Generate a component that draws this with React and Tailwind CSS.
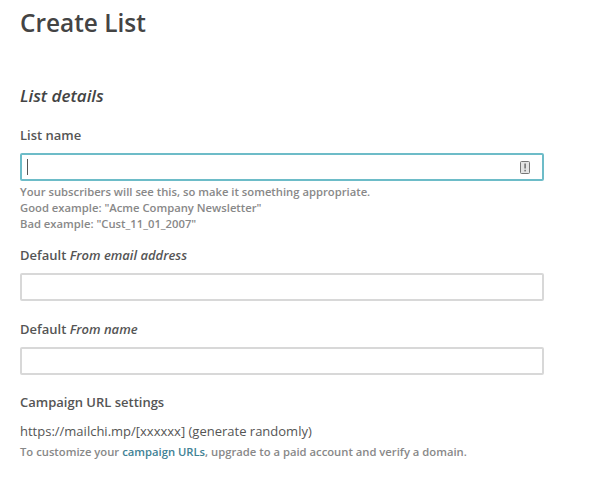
import React from "react";

function Field({ focused, children }) {
  return (
    <div
      className={
        focused
          ? "flex items-center justify-between w-[524px] h-[28px] border-2 border-[#6dbcc8] rounded-[2px] pl-[5px] pr-[12px]"
          : "w-[524px] h-[28px] border-2 border-[#d8d8d8] rounded-[2px]"
      }
    >
      {children}
    </div>
  );
}

export default function App() {
  return (
    <div className="w-[609px] h-[484px] overflow-hidden bg-white pl-[20px] text-[#555555] font-['Open_Sans',sans-serif]">
      <h1 className="pt-[6px] text-[24.4px] leading-[34px] font-semibold text-[#444444]">Create List</h1>

      <h2 className="mt-[44px] text-[17px] leading-[24px] font-semibold italic text-[#444444]">List details</h2>

      <label className="block mt-[18px] text-[13px] leading-[18px] font-semibold">List name</label>
      <div className="mt-[9px]">
        <Field focused>
          <span className="w-px h-[16px] bg-[#555555]"></span>
          <svg width="10" height="13" viewBox="0 0 10 13" fill="none">
            <rect x="0.5" y="0.5" width="9" height="12" rx="1" fill="#e4e4e4" stroke="#777777" />
            <rect x="4.4" y="2.5" width="1.4" height="5" fill="#666666" />
            <rect x="4.4" y="8.8" width="1.4" height="1.6" fill="#666666" />
          </svg>
        </Field>
      </div>
      <div className="mt-[3px] text-[11.25px] leading-[16px] font-semibold text-[#888888]">
        <p>Your subscribers will see this, so make it something appropriate.</p>
        <p>Good example: "Acme Company Newsletter"</p>
        <p>Bad example: "Cust_11_01_2007"</p>
      </div>

      <label className="block mt-[14px] text-[13px] leading-[18px] font-semibold">
        Default <em>From email address</em>
      </label>
      <div className="mt-[9px]">
        <Field />
      </div>

      <label className="block mt-[19px] text-[13px] leading-[18px] font-semibold">
        Default <em>From name</em>
      </label>
      <div className="mt-[9px]">
        <Field />
      </div>

      <label className="block mt-[18px] text-[13px] leading-[18px] font-semibold">Campaign URL settings</label>
      <p className="mt-[11px] text-[13px] leading-[18px]">https://mailchi.mp/[xxxxxx] (generate randomly)</p>
      <p className="mt-[4px] text-[11.25px] leading-[15px] font-semibold text-[#888888]">
        To customize your <a className="text-[#3f8295]">campaign URLs</a>, upgrade to a paid account and verify a domain.
      </p>
    </div>
  );
}
